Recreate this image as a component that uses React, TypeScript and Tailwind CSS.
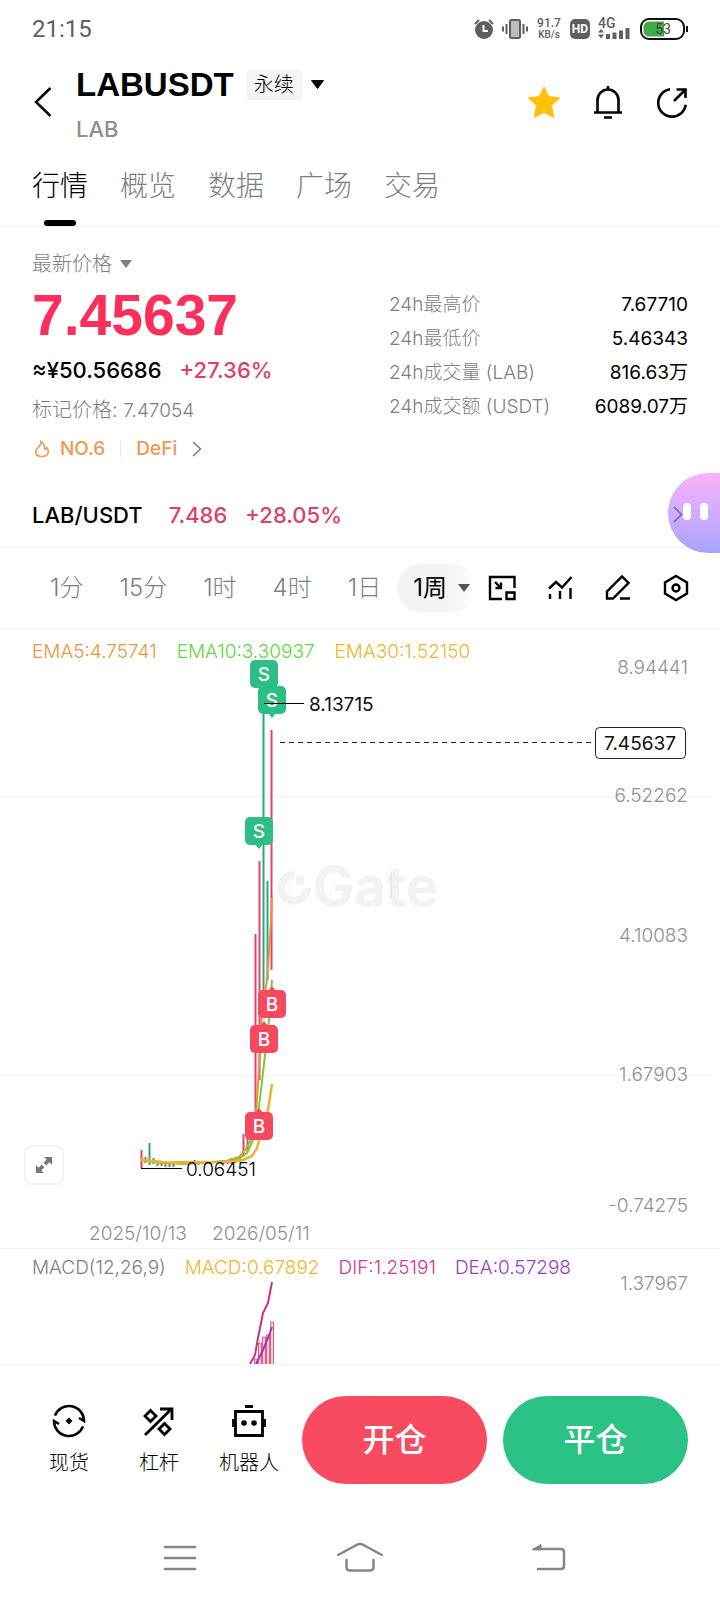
import { useState } from 'react'

interface Marker {
  side: 'B' | 'S'
  x: number
  y: number
}

interface Candle {
  x: number
  high: number
  low: number
  up: boolean
}

const tabs = ['行情', '概览', '数据', '广场', '交易']
const intervals = ['1分', '15分', '1时', '4时', '1日']

const stats = [
  { label: '24h最高价', value: '7.67710' },
  { label: '24h最低价', value: '5.46343' },
  { label: '24h成交量 (LAB)', value: '816.63万' },
  { label: '24h成交额 (USDT)', value: '6089.07万' },
]

const axisLabels = [
  { y: 14, text: '8.94441' },
  { y: 142, text: '6.52262' },
  { y: 282, text: '4.10083' },
  { y: 421, text: '1.67903' },
  { y: 552, text: '-0.74275' },
]

// Red candles are the rising ones on this chart
const candles: Candle[] = [
  { x: 141, high: 490, low: 508, up: true },
  { x: 145, high: 497, low: 503, up: true },
  { x: 149, high: 483, low: 505, up: false },
  { x: 153, high: 498, low: 504, up: false },
  { x: 157, high: 501, low: 506, up: false },
  { x: 161, high: 502, low: 506, up: true },
  { x: 165, high: 502, low: 507, up: false },
  { x: 169, high: 502, low: 507, up: true },
  { x: 173, high: 503, low: 507, up: false },
  { x: 194, high: 500, low: 504, up: true },
  { x: 198, high: 501, low: 505, up: false },
  { x: 223, high: 501, low: 504, up: true },
  { x: 227, high: 500, low: 504, up: true },
  { x: 231, high: 498, low: 504, up: true },
  { x: 235, high: 498, low: 503, up: false },
  { x: 239, high: 497, low: 502, up: true },
  { x: 243, high: 474, low: 496, up: true },
  { x: 247, high: 478, low: 492, up: false },
  { x: 255, high: 274, low: 460, up: true },
  { x: 259, high: 201, low: 420, up: true },
  { x: 263, high: 29, low: 345, up: false },
  { x: 267, high: 221, low: 320, up: false },
  { x: 271, high: 70, low: 310, up: true },
]

const markers: Marker[] = [
  { side: 'S', x: 250, y: 0 },
  { side: 'S', x: 258, y: 26 },
  { side: 'S', x: 245, y: 157 },
  { side: 'B', x: 258, y: 330 },
  { side: 'B', x: 250, y: 365 },
  { side: 'B', x: 245, y: 452 },
]

function StatusBar() {
  return (
    <div className="flex h-[57px] items-center justify-between px-8 font-[Roboto,sans-serif] text-[#5f5f5f]">
      <span className="text-2xl">21:15</span>
      <div className="flex items-center gap-2">
        <svg className="h-5 w-5" viewBox="0 0 20 20" fill="none">
          <circle cx="10" cy="11" r="9" fill="#5f5f5f" />
          <path d="M1 5l4-4M19 5l-4-4" stroke="#5f5f5f" strokeWidth="2" />
          <path d="M9.500 6v6H14" stroke="#fff" strokeWidth="2" />
        </svg>
        <svg className="h-5 w-[26px]" viewBox="0 0 26 20" fill="none" stroke="#5f5f5f" strokeWidth="2">
          <rect x="8" y="1" width="10" height="18" rx="1.5" fill="#bdbdbd" />
          <path d="M4.500 5v10M1 7.500v5M21.500 5v10M25 7.500v5" />
        </svg>
        <div className="flex w-[26px] flex-col items-center text-[10px] leading-[11px] font-medium">
          <span className="text-xs leading-[11px]">91.7</span>
          <span>KB/s</span>
        </div>
        <span className="flex h-5 w-5 items-center justify-center rounded-[5px] bg-[#5f5f5f] text-xs font-bold text-white">
          HD
        </span>
        <svg className="h-[30px] w-8" viewBox="0 -4 32 30" fill="#5f5f5f">
          <text x="0" y="10" fontSize="14" fontWeight="500">4G</text>
          <path d="M0 14.500l3-3.500 3 3.500zM0 16.500h6l-3 4z" />
          <path d="M8 16h4v5H8zM14.500 14.500h4V21h-4zM21 12.500h4V21h-4zM27.500 10h4v11h-4z" />
        </svg>
        <svg className="ml-[2px] h-[22px] w-12" viewBox="0 0 48 22">
          <rect x="1" y="1" width="43" height="20" rx="8" fill="#fff" stroke="#111" strokeWidth="2" />
          <path d="M9 3.500h15v15H9a5.500 5.500 0 0 1-5.500-5.500V9A5.500 5.500 0 0 1 9 3.500z" fill="#43a847" />
          <path d="M47 8v6" stroke="#111" strokeWidth="2" />
          <text x="23" y="16" fontSize="14" textAnchor="middle" fill="#444">53</text>
        </svg>
      </div>
    </div>
  )
}

function Header() {
  return (
    <header className="flex h-[94px] items-center px-[34px]">
      <button type="button" aria-label="返回" className="-mt-1 mr-6">
        <svg className="h-[30px] w-[18px]" viewBox="0 0 18 30" fill="none" stroke="#000" strokeWidth="2.500">
          <path d="M16.500 1L2 15l14.500 14" />
        </svg>
      </button>
      <div className="flex flex-col gap-[10px]">
        <div className="flex h-10 items-center">
          <h1 className="font-['Liberation_Sans',sans-serif] text-[33px] font-bold">LABUSDT</h1>
          <span className="ml-3 rounded bg-[#f5f5f5] px-2 py-px text-xl leading-7 font-light">永续</span>
          <button type="button" aria-label="选择合约" className="ml-2">
            <svg className="h-3 w-4" viewBox="0 0 16 12">
              <path d="M1.500 1.500h12L7.500 9.500z" stroke="#000" />
            </svg>
          </button>
        </div>
        <p className="text-[22px] leading-7 font-medium text-[#8d8f91]">LAB</p>
      </div>
      <div className="-mt-1 -mr-1 ml-auto flex items-center gap-7">
        <button type="button" aria-label="收藏">
          <svg className="h-9 w-9" viewBox="0 0 36 36">
            <path
              d="M18 3l4.700 9.500 11 1.500-8.200 7.600 2.500 11.900L18 28.400 8 33.500l2.500-11.900L2.300 14l11-1.500z"
              fill="#ffc107"
              stroke="#ffc107"
              strokeLinejoin="round"
            />
          </svg>
        </button>
        <button type="button" aria-label="提醒">
          <svg className="h-9 w-9" viewBox="0 0 36 36" fill="none" stroke="#000" strokeWidth="2.600">
            <path d="M7.500 28V16a10.500 10.500 0 0 1 21 0v12M4 28.500h28M18 5.500V2M14 33.500h8" />
          </svg>
        </button>
        <button type="button" aria-label="分享">
          <svg className="h-9 w-9" viewBox="0 0 36 36" fill="none" stroke="#000" strokeWidth="2.600">
            <path d="M16 5.200a13.800 13.800 0 1 0 15.700 15.600M20 17L31 6M22.500 5.500h9V14" />
          </svg>
        </button>
      </div>
    </header>
  )
}

function PriceSummary() {
  return (
    <section className="flex justify-between px-8 pt-[21px]">
      <div>
        <button type="button" className="flex h-8 items-center gap-2 text-xl font-light text-[#7d7f81]">
          最新价格
          <svg className="h-[10px] w-[14px]" viewBox="0 0 14 10">
            <path d="M0 1h12L6 9z" fill="#7d7f81" />
          </svg>
        </button>
        <p className="font-['Liberation_Sans',sans-serif] text-[57px] leading-[70px] font-bold text-[#fb2f5c]">7.45637</p>
        <p className="flex h-10 items-center gap-[18px] text-[22px] font-medium">
          <span>≈¥50.56686</span>
          <span className="text-[#dd3f68]">+27.36%</span>
        </p>
        <p className="text-xl leading-10 font-light text-[#7d7f81]">
          标记价格: <span className="text-[19px]">7.47054</span>
        </p>
        <div className="flex h-9 items-center text-[19px] font-medium text-[#ef9950]">
          <svg className="mx-[2px] h-[18px] w-4" viewBox="0 0 16 18" fill="none" stroke="#ef9950" strokeWidth="1.600">
            <path d="M7 1.500c.5 2.500-.8 4.200-2.800 6C2.500 9.200 1.500 10.500 1.700 12.300c.3 2.800 2.800 4.200 6.300 4.200s6-1.700 6.300-4.500c.1-1.800-.5-3.300-1.500-4.500-.5 1.200-1.200 1.700-2.200 2C10.700 6 9.500 3 7 1.500z" />
          </svg>
          <a href="#rank" className="ml-2">NO.6</a>
          <span className="mx-[15px] h-4 w-px bg-gray-200" />
          <a href="#defi" className="flex items-center gap-[15px]">
            DeFi
            <svg className="h-4 w-[10px]" viewBox="0 0 10 16" fill="none" stroke="#7d7f81" strokeWidth="1.600">
              <path d="M1 1l7.500 7L1 15" />
            </svg>
          </a>
        </div>
      </div>
      <dl className="mt-10 w-[299px] text-[19px] leading-[34px]">
        {stats.map((stat) => (
          <div key={stat.label} className="flex justify-between">
            <dt className="font-light text-[#7d7f81]">{stat.label}</dt>
            <dd>{stat.value}</dd>
          </div>
        ))}
      </dl>
    </section>
  )
}

function SpotRow() {
  return (
    <div className="relative mt-4 flex h-[65px] items-center border-b border-gray-100 px-8 text-[22px] font-medium">
      <span className="mr-[26px]">LAB/USDT</span>
      <span className="mr-[18px] text-[#dd3f68]">7.486</span>
      <span className="text-[#dd3f68]">+28.05%</span>
      {/* Assistant bubble docked to the screen edge */}
      <button
        type="button"
        aria-label="助手"
        className="absolute -top-[10px] right-0 h-20 w-[52px] rounded-l-full bg-linear-to-b from-[#fab2fb] to-[#a6a5ff]"
      >
        <svg className="h-20 w-[52px]" viewBox="0 0 52 80" fill="none">
          <path d="M6 34l7.500 7.500L6 49" stroke="#8674b8" strokeWidth="2" />
          <rect x="15" y="30" width="8" height="17" rx="4" fill="#fff" />
          <rect x="32" y="30" width="8" height="17" rx="4" fill="#fff" />
        </svg>
      </button>
    </div>
  )
}

function Toolbar() {
  const [selected, setSelected] = useState('1周')

  return (
    <div className="flex h-[81px] items-center border-b border-gray-100 pr-[30px] pl-[50px] text-2xl">
      <div className="flex gap-9">
        {intervals.map((item) => (
          <button
            key={item}
            type="button"
            onClick={() => setSelected(item)}
            className={`font-light ${selected === item ? 'text-black' : 'text-[#7d7f81]'}`}
          >
            {item}
          </button>
        ))}
      </div>
      <button
        type="button"
        onClick={() => setSelected('1周')}
        className="ml-4 flex h-12 items-center gap-[10px] rounded-full bg-linear-to-r from-[#f4f4f4] from-60% to-white pr-2 pl-4"
      >
        1周
        <svg className="h-[10px] w-[14px]" viewBox="0 0 14 10">
          <path d="M1 1h12L7 9z" fill="#555" />
        </svg>
      </button>
      <div className="ml-auto flex gap-[30px]">
        <button type="button" aria-label="悬浮窗">
          <svg className="h-7 w-7" viewBox="0 0 28 28" fill="none" stroke="#000" strokeWidth="2.400">
            <path d="M14 25H2V3h24.500v11M7 8l6 6M13 8.500V14H7.500" />
            <path d="M18.500 18.500h8V25h-8z" />
          </svg>
        </button>
        <button type="button" aria-label="指标">
          <svg className="h-7 w-7" viewBox="0 0 28 28" fill="none" stroke="#000" strokeWidth="2.400">
            <path d="M3 14.500l7-6.500 6 5.500L25.500 3M4 20v5M14 17v8M24.500 14v11" />
          </svg>
        </button>
        <button type="button" aria-label="画线">
          <svg className="h-7 w-7" viewBox="0 0 28 28" fill="none" stroke="#000" strokeWidth="2.400">
            <path d="M3 24.500v-7L18 2.500l6.500 6.500L9 24.500zM16 24.500h10" />
          </svg>
        </button>
        <button type="button" aria-label="设置">
          <svg className="h-7 w-7" viewBox="0 0 28 28" fill="none" stroke="#000" strokeWidth="2.400">
            <path d="M14 2l11 6.500v11L14 26 3 19.500v-11z" />
            <circle cx="14" cy="14" r="3.500" />
          </svg>
        </button>
      </div>
    </div>
  )
}

function MarkerBadge({ side, x, y }: Marker) {
  const color = side === 'S' ? '#2ebd85' : '#f4495f'
  return (
    <g>
      <path d={side === 'S' ? `M${x + 10} ${y + 27}h8l-4 5z` : `M${x + 10} ${y + 1}h8l-4-5z`} fill={color} />
      <rect x={x} y={y} width="28" height="28" rx="5" fill={color} />
      <text x={x + 14} y={y + 21} textAnchor="middle" fontWeight="500" fill="#fff">{side}</text>
    </g>
  )
}

function PriceChart() {
  return (
    <section className="relative border-b border-gray-100">
      <div className="flex gap-5 px-8 pt-[13px] text-[19px] leading-5 font-light">
        <span className="text-[#e8963a]">EMA5:4.75741</span>
        <span className="text-[#5fd83f]">EMA10:3.30937</span>
        <span className="text-[#efb62c]">EMA30:1.52150</span>
      </div>
      <svg className="-mt-[10px] block w-full" viewBox="0 -8 720 596" fill="none" fontSize="19" fontWeight="300">
        <path d="M0 136.500h712M0 415.500h712" stroke="#f0f1f2" />

        {/* Watermark */}
        <path d="M294 211a17 17 0 1 0 17 17h-8a9 9 0 1 1-9-9z" fill="#f1f3f4" />
        <path d="M296 216h8v9h-8z" fill="#f1f3f4" />
        <text x="313" y="246" fontSize="55" fontWeight="700" fill="#f1f3f4">Gate</text>
        <path d="M391 212v26" stroke="#d8dadb" />

        {axisLabels.map((label) => (
          <text key={label.text} x="688" y={label.y} textAnchor="end" fill="#8f9193">{label.text}</text>
        ))}

        {candles.map((candle) => (
          <path
            key={candle.x}
            d={`M${candle.x + 0.5} ${candle.high}V${candle.low}`}
            stroke={candle.up ? '#e0446a' : '#2aa87c'}
            strokeWidth="2"
          />
        ))}

        <g strokeWidth="2" strokeLinejoin="round">
          <path d="M272 238l-2 40-3 42-5 32-3 58-3 45-4 22-6 12-7 8-12 4-25 2-20-1-20 1-21-3" stroke="#ee8f3a" />
          <path d="M272 320l-3 40-4 35-4 35-3 25-5 25-6 13-8 6-14 2-40 3-25-1-19-4" stroke="#6bd13e" />
          <path d="M272 424l-4 26-6 20-5 18-5 8-9 4-20 2-50 1-20-2-12-1" stroke="#f0b32e" strokeWidth="2.500" />
        </g>

        {markers.map((marker) => (
          <MarkerBadge key={marker.y} {...marker} />
        ))}

        <path d="M264 43.500h40M141 508.500h41" stroke="#000" />
        <text x="309" y="51" fontWeight="400" fill="#111">8.13715</text>
        <text x="186" y="516" fontWeight="300" fill="#000">0.06451</text>

        <path d="M280 82.500h315" stroke="#222" strokeWidth="1.200" strokeDasharray="5 4" />
        <rect x="595.500" y="67.500" width="90" height="31" rx="4" fill="#fff" stroke="#222" />
        <text x="640" y="90" textAnchor="middle" fontWeight="400" fill="#111">7.45637</text>

        <text x="89" y="580" fill="#8f9193">2025/10/13</text>
        <text x="212" y="580" fill="#8f9193">2026/05/11</text>
      </svg>
      <button
        type="button"
        aria-label="全屏"
        className="absolute bottom-[63px] left-6 flex h-10 w-10 items-center justify-center rounded-lg border-2 border-gray-100 bg-white"
      >
        <svg className="h-[18px] w-[18px]" viewBox="0 0 20 20" fill="#777">
          <path d="M10 1h9v9l-3-3-3.500 3.500-3-3L13 4zM10 19H1v-9l3 3 3.500-3.500 3 3L7 16z" />
        </svg>
      </button>
    </section>
  )
}

function MacdChart() {
  return (
    <section className="border-b border-gray-100">
      <div className="flex gap-[19px] px-8 pt-[9px] text-[19px] leading-5 font-light">
        <span className="text-[#7d7f81]">MACD(12,26,9)</span>
        <span className="text-[#efb62c]">MACD:0.67892</span>
        <span className="text-[#d8348a]">DIF:1.25191</span>
        <span className="text-[#a03cc4]">DEA:0.57298</span>
      </div>
      <svg className="-mt-[10px] block w-full" viewBox="0 -8 720 96" fill="none" fontSize="19" fontWeight="300">
        <text x="688" y="14" textAnchor="end" fill="#8f9193">1.37967</text>
        <g stroke="#e35d7f" fill="#fbd3dd">
          <path d="M254.500 88V83h3v5M258.500 88V67h3v21M262.500 88V61h3v27M266.500 88V59h3v29M270.500 88V46h3v42" />
        </g>
        <path d="M250 88l5-9 3-17 5-25 5-10 4-21" stroke="#d0317f" strokeWidth="2" />
        <path d="M256 88l7-14 5-12 4-11" stroke="#a832c8" strokeWidth="2" />
      </svg>
    </section>
  )
}

function BottomBar() {
  return (
    <div className="flex items-center pt-[31px] pr-8 pb-8 pl-6 text-xl leading-7 font-light">
      <a href="#spot" className="flex w-[90px] flex-col items-center gap-[11px]">
        <svg className="h-[34px] w-[34px]" viewBox="0 0 34 34" fill="none" stroke="#000" strokeWidth="2.600">
          <path d="M3 11.600A15 15 0 0 1 32 17l-5-3M31 22.400A15 15 0 0 1 2 17l5 3" />
          <path d="M17 13.500l3.500 3.500-3.500 3.500-3.500-3.500z" fill="#000" stroke="none" />
        </svg>
        现货
      </a>
      <a href="#margin" className="flex w-[90px] flex-col items-center gap-[11px]">
        <svg className="h-[34px] w-[34px]" viewBox="0 0 34 34" fill="none" stroke="#000" strokeWidth="2.800">
          <path d="M3 31L29.500 5M18 5h12V16" />
          <path d="M8.500 6.500l5.500 5.500-5.500 5.500L3 12zM22.500 19.500L28 25l-5.500 5.500L17 25z" />
        </svg>
        杠杆
      </a>
      <a href="#bot" className="flex w-[90px] flex-col items-center gap-[11px]">
        <svg className="h-[34px] w-[34px]" viewBox="0 0 34 34" fill="none" stroke="#000" strokeWidth="2.800">
          <path d="M3.500 7.500h27v24h-27zM13 2.500h8M1.500 15v8M32.500 15v8" />
          <circle cx="12" cy="19" r="2.800" fill="#000" stroke="none" />
          <circle cx="22" cy="19" r="2.800" fill="#000" stroke="none" />
        </svg>
        机器人
      </a>
      <div className="ml-2 flex flex-1 gap-4 text-[32px] font-medium text-white">
        <button type="button" className="h-[88px] flex-1 rounded-full bg-[#f84b60]">开仓</button>
        <button type="button" className="h-[88px] flex-1 rounded-full bg-[#2bc286]">平仓</button>
      </div>
    </div>
  )
}

function SystemNav() {
  return (
    <nav className="grid h-[84px] grid-cols-3 place-items-center px-[90px]">
      <button type="button" aria-label="最近任务">
        <svg className="h-8 w-[34px]" viewBox="0 0 34 32" stroke="#868686" strokeWidth="2.500" strokeLinecap="round">
          <path d="M2 5h30M2 16h30M2 27h30" />
        </svg>
      </button>
      <button type="button" aria-label="主屏幕">
        <svg className="h-8 w-12" viewBox="0 0 48 32" fill="none" stroke="#868686" strokeWidth="2.500" strokeLinecap="round">
          <path d="M2 13L20.500 3Q24 1 27.500 3L46 13M10.500 18v7q0 3.500 3.500 3.500h20q3.500 0 3.500-3.500v-7" />
        </svg>
      </button>
      <button type="button" aria-label="返回上一页">
        <svg className="h-8 w-[52px]" viewBox="0 0 52 32" fill="none" stroke="#868686" strokeWidth="2.500" strokeLinecap="round">
          <path d="M20 7h27q3 0 3 3v14q0 3-3 3H24" />
          <path d="M18.500 7.500L27 2.500v5z" fill="#868686" strokeWidth="1" />
        </svg>
      </button>
    </nav>
  )
}

export default function App() {
  const [activeTab, setActiveTab] = useState('行情')

  return (
    <div className="min-h-screen bg-white font-[Inter,'Noto_Sans_CJK_SC',sans-serif] text-black">
      <StatusBar />
      <Header />

      {/* Section tabs */}
      <nav className="flex gap-8 border-b border-gray-100 px-8">
        {tabs.map((tab) => (
          <button
            key={tab}
            type="button"
            onClick={() => setActiveTab(tab)}
            className={`relative h-[75px] pt-[15px] pb-5 text-[28px] leading-10 font-light ${
              activeTab === tab ? 'text-black' : 'text-[#7d7f81]'
            }`}
          >
            {tab}
            {activeTab === tab && (
              <span className="absolute bottom-0 left-1/2 h-[6px] w-8 -translate-x-1/2 rounded-full bg-black" />
            )}
          </button>
        ))}
      </nav>

      <PriceSummary />
      <SpotRow />
      <Toolbar />
      <PriceChart />
      <MacdChart />
      <BottomBar />
      <SystemNav />
    </div>
  )
}
